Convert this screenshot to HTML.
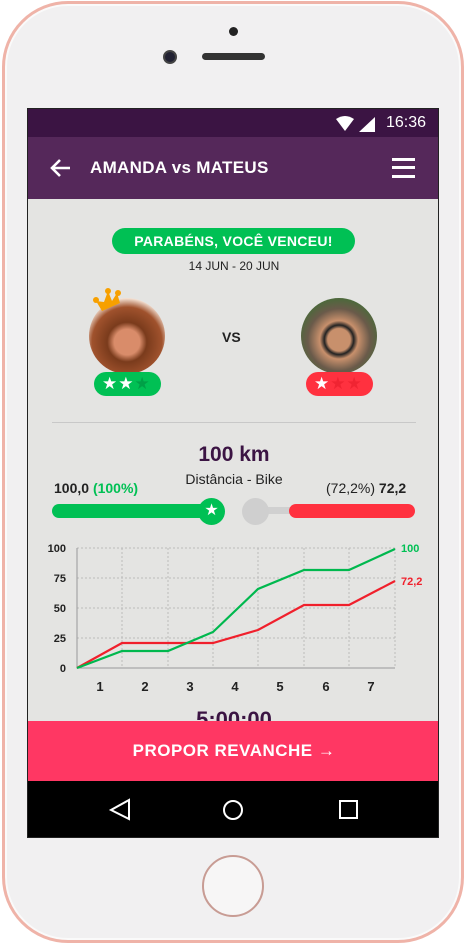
<!DOCTYPE html>
<html><head><meta charset="utf-8"><style>
*{margin:0;padding:0;box-sizing:border-box}
body{width:466px;height:948px;background:#fff;position:relative;overflow:hidden;font-family:"Liberation Sans",sans-serif}
.phone{position:absolute;left:2px;top:1px;width:462px;height:942px;border-radius:66px;background:#f1f0f1;border:3px solid #efb3a8;box-shadow:inset 0 0 0 2px #fafafa}
.a{position:absolute}
.screen{position:absolute;left:27px;top:108px;width:412px;height:730px;background:#e4e4e2;overflow:hidden;border:1px solid #222}
.b{font-weight:bold}
</style></head><body>
<div class="phone"></div>
<div class="a" style="left:229px;top:27px;width:9px;height:9px;border-radius:50%;background:#222"></div>
<div class="a" style="left:163px;top:50px;width:14px;height:14px;border-radius:50%;background:#223;border:2px solid #444"></div>
<div class="a" style="left:202px;top:53px;width:63px;height:7px;border-radius:4px;background:#333"></div>
<div class="a" style="left:202px;top:855px;width:62px;height:62px;border-radius:50%;border:2px solid #c89c94;background:#f7f6f6"></div>

<div class="screen">
 <div class="a" style="left:0;top:0;width:412px;height:28px;background:#3b1443"></div>
 <svg class="a" style="left:305px;top:6px" width="45" height="18"><path d="M3 4 Q12 -2 21 4 L12 16Z" fill="#fff"/><path d="M26 17 L42 2 L42 17Z" fill="#fff"/></svg>
 <div class="a" style="left:358px;top:5px;color:#fff;font-size:16px">16:36</div>
 <div class="a" style="left:0;top:28px;width:412px;height:62px;background:#55285a"></div>
 <svg class="a" style="left:22px;top:49px" width="22" height="20"><path d="M20 10H3M10 2 2 10l8 8" stroke="#fff" stroke-width="2.6" fill="none"/></svg>
 <div class="a b" style="left:62px;top:49px;color:#fff;font-size:17px;letter-spacing:.3px">AMANDA vs MATEUS</div>
 <div class="a" style="left:364px;top:49px;width:23px;height:20px;border-top:3px solid #fff;border-bottom:3px solid #fff"></div>
 <div class="a" style="left:364px;top:57px;width:23px;height:3px;background:#fff"></div>

 <div class="a b" style="left:84px;top:119px;width:243px;height:26px;border-radius:13px;background:#00c054;color:#fff;font-size:14px;text-align:center;line-height:26px;letter-spacing:.3px">PARABÉNS, VOCÊ VENCEU!</div>
 <div class="a" style="left:0;top:150px;width:412px;text-align:center;font-size:12px;color:#222">14 JUN - 20 JUN</div>
 <div class="a" style="left:61px;top:189px;width:76px;height:76px;border-radius:50%;background:radial-gradient(circle at 50% 58%,#d98c6a 0 22%,#7a3b1c 34%,#a0522d 60%,#f3e0d2 75%)"></div>
 <svg class="a" style="left:64px;top:178px" width="32" height="28"><path d="M4 14 L10 24 L28 16 L25 6 L20 14 L16 4 L12 15Z" fill="#f7a000"/><circle cx="4" cy="13" r="3" fill="#f7a000"/><circle cx="16" cy="4" r="3" fill="#f7a000"/><circle cx="26" cy="6" r="3" fill="#f7a000"/></svg>
 <div class="a b" style="left:194px;top:220px;font-size:14px;color:#222">VS</div>
 <div class="a" style="left:273px;top:189px;width:76px;height:76px;border-radius:50%;background:radial-gradient(circle at 50% 55%,#c8906c 0 20%,#222 26%,#c8906c 34%,#6a5a4a 55%,#4a6a3a 75%)"></div>
 <div class="a" style="left:66px;top:263px;width:67px;height:24px;border-radius:12px;background:#00c054;color:#fff;font-size:17px;line-height:24px;padding-left:8px;letter-spacing:1px">★★<span style="color:#00a047">★</span></div>
 <div class="a" style="left:278px;top:263px;width:67px;height:24px;border-radius:12px;background:#ff313f;color:#fff;font-size:17px;line-height:24px;padding-left:8px;letter-spacing:1px">★<span style="color:#f02432">★★</span></div>

 <div class="a" style="left:24px;top:313px;width:364px;height:1px;background:#c8c8c8"></div>
 <div class="a b" style="left:0;top:334px;width:412px;text-align:center;font-size:21px;color:#3b1443">100 km</div>
 <div class="a" style="left:0;top:362px;width:412px;text-align:center;font-size:14px;color:#222">Distância - Bike</div>
 <div class="a b" style="left:26px;top:371px;font-size:14px;color:#222">100,0 <span style="color:#00c054">(100%)</span></div>
 <div class="a" style="left:298px;top:371px;font-size:14px;color:#222">(72,2%) <b>72,2</b></div>
 <div class="a" style="left:24px;top:395px;width:170px;height:14px;border-radius:7px;background:#00c054"></div>
 <div class="a" style="left:170px;top:389px;width:27px;height:27px;border-radius:50%;background:#00c054;color:#fff;text-align:center;line-height:26px;font-size:16px">★</div>
 <div class="a" style="left:230px;top:398px;width:35px;height:7px;background:#d0d0d0"></div>
 <div class="a" style="left:214px;top:389px;width:27px;height:27px;border-radius:50%;background:#cfcfcf"></div>
 <div class="a" style="left:261px;top:395px;width:126px;height:14px;border-radius:7px;background:#ff313f"></div>

 <svg class="a" style="left:0;top:420px" width="412" height="170" font-family="Liberation Sans" font-weight="bold" font-size="11">
  <g stroke="#bbb" stroke-dasharray="2 2" stroke-width="1">
   <path d="M49 19H367M49 49H367M49 79H367M49 109H367M94 19V139M140 19V139M185 19V139M230 19V139M276 19V139M321 19V139M367 19V139"/>
  </g>
  <path d="M49 19V139H367" stroke="#999" fill="none"/>
  <g fill="#222" text-anchor="end"><text x="38" y="23">100</text><text x="38" y="53">75</text><text x="38" y="83">50</text><text x="38" y="113">25</text><text x="38" y="143">0</text></g>
  <g fill="#222" text-anchor="middle" font-size="13"><text x="72" y="162">1</text><text x="117" y="162">2</text><text x="162" y="162">3</text><text x="207" y="162">4</text><text x="252" y="162">5</text><text x="298" y="162">6</text><text x="343" y="162">7</text></g>
  <polyline points="49,139 94,114 140,114 185,114 230,101 276,76 321,76 367,52" stroke="#f0202c" stroke-width="2.2" fill="none"/>
  <polyline points="49,139 94,122 140,122 185,103 230,60 276,41 321,41 367,20" stroke="#00b84e" stroke-width="2.2" fill="none"/>
  <text x="373" y="23" fill="#00c054">100</text><text x="373" y="56" fill="#f0202c">72,2</text>
 </svg>
 <div class="a b" style="left:0;top:598px;width:412px;text-align:center;font-size:22px;color:#3b1443">5:00:00</div>
 <div class="a b" style="left:0;top:612px;width:412px;height:60px;background:#ff3763;color:#fff;font-size:17px;text-align:center;line-height:60px;letter-spacing:.5px">PROPOR REVANCHE →</div>
 <div class="a" style="left:0;top:672px;width:412px;height:58px;background:#000"></div>
 <svg class="a" style="left:0;top:672px" width="412" height="58"><path d="M101 19 83 29 101 38Z" stroke="#fff" stroke-width="2" fill="none"/><circle cx="205" cy="29" r="9" stroke="#fff" stroke-width="2" fill="none"/><rect x="312" y="20" width="17" height="17" stroke="#fff" stroke-width="2" fill="none"/></svg>
</div>
</body></html>
